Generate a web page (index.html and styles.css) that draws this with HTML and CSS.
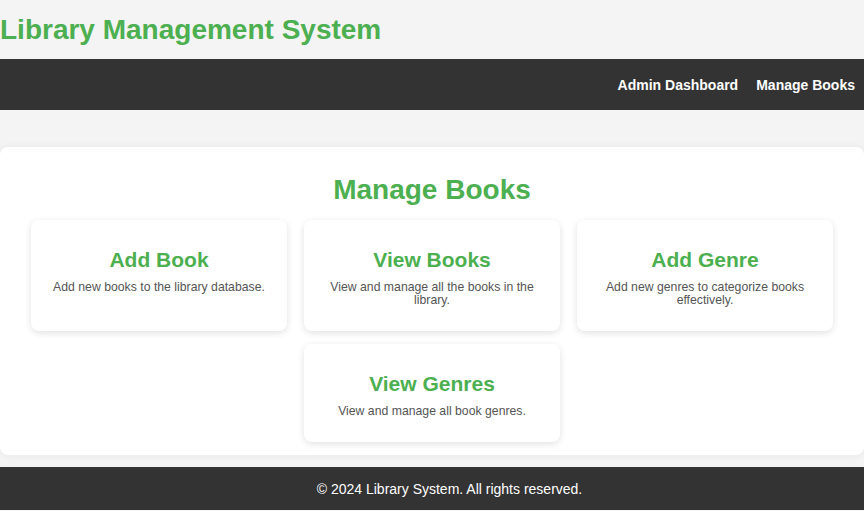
FILE: index.html
```html
<!DOCTYPE html>
<html lang="en">
<head>
<meta charset="UTF-8">
<title>Library Management System</title>
<link rel="stylesheet" href="styles.css">
</head>
<body>
<header class="site-header">
  <h1 class="site-title">Library Management System</h1>
</header>
<nav class="site-nav">
  <a href="#" class="nav-link">Admin Dashboard</a>
  <a href="#" class="nav-link">Manage Books</a>
</nav>
<main class="main">
  <section class="panel">
    <h2 class="panel-title">Manage Books</h2>
    <div class="cards">
      <div class="card">
        <h3 class="card-title">Add Book</h3>
        <p class="card-text">Add new books to the library database.</p>
      </div>
      <div class="card">
        <h3 class="card-title">View Books</h3>
        <p class="card-text">View and manage all the books in the library.</p>
      </div>
      <div class="card">
        <h3 class="card-title">Add Genre</h3>
        <p class="card-text">Add new genres to categorize books effectively.</p>
      </div>
      <div class="card">
        <h3 class="card-title">View Genres</h3>
        <p class="card-text">View and manage all book genres.</p>
      </div>
    </div>
  </section>
</main>
<footer class="site-footer">
  <p class="footer-text">&copy; 2024 Library System. All rights reserved.</p>
</footer>
</body>
</html>
```
FILE: styles.css
```css
* { box-sizing: border-box; }
html, body { margin: 0; padding: 0; }
body {
  background: #f4f4f4;
  font-family: "Liberation Sans", Arial, sans-serif;
  font-size: 14px;
  color: #333;
}
.site-header {
  height: 59px;
  display: flex;
  align-items: center;
  padding: 0;
}
.site-title {
  margin: 0;
  font-size: 28px;
  font-weight: bold;
  color: #4caf50;
  line-height: 32px;
}
.site-nav {
  background: #333;
  height: 51px;
  display: flex;
  justify-content: flex-end;
  align-items: center;
  gap: 18px;
  padding-right: 9px;
}
.nav-link {
  color: #fff;
  font-weight: bold;
  font-size: 14px;
  text-decoration: none;
}
.main {
  padding-top: 37px;
  padding-bottom: 12px;
}
.panel {
  background: #fff;
  border-radius: 8px;
  box-shadow: 0 0 8px rgba(0,0,0,0.06);
  padding: 27px 0 13px;
}
.panel-title {
  margin: 0 0 14px;
  text-align: center;
  font-size: 28px;
  line-height: 32px;
  color: #4caf50;
}
.cards {
  display: flex;
  flex-wrap: wrap;
  justify-content: center;
  column-gap: 17px;
  row-gap: 13px;
}
.card {
  width: 256px;
  background: #fff;
  border-radius: 8px;
  box-shadow: 0 2px 7px rgba(0,0,0,0.12);
  padding: 28px 20px 24px;
  text-align: center;
}
.card-title {
  margin: 0 0 9px;
  font-size: 21px;
  line-height: 24px;
  color: #4caf50;
}
.card-text {
  margin: 0;
  font-size: 12.25px;
  line-height: 13px;
  color: #555;
}
.site-footer {
  background: #333;
  height: 43px;
  display: flex;
  align-items: center;
  justify-content: center;
  padding-left: 35px;
}
.footer-text {
  margin: 0;
  color: #fff;
  font-size: 14px;
}
```
